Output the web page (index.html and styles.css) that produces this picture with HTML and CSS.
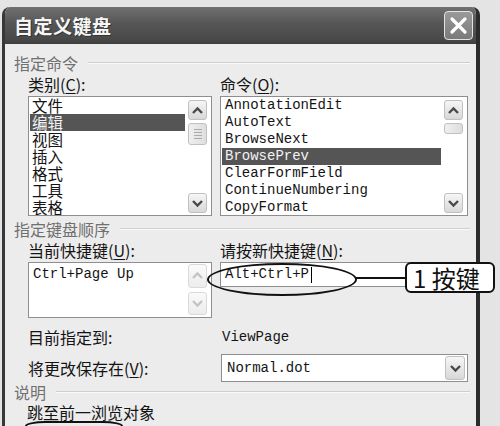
FILE: index.html
```html
<!DOCTYPE html>
<html lang="zh">
<head>
<meta charset="utf-8">
<title>自定义键盘</title>
<link rel="stylesheet" href="styles.css">
</head>
<body>
<div class="window">
  <div class="titlebar">
    <span class="title">自定义键盘</span>
    <span class="close"><svg width="21" height="21" viewBox="0 0 21 21"><path d="M4 4 L17 17 M17 4 L4 17" stroke="#fff" stroke-width="3.2" stroke-linecap="round"/></svg></span>
  </div>
  <div class="content">
    <div class="group-head first"><span>指定命令</span><i class="rule"></i></div>
    <div class="cols">
      <div class="col">
        <div class="label">类别(<u>C</u>):</div>
        <div class="listbox tall">
          <ul class="items cjk">
            <li>文件</li>
            <li class="sel">编辑</li>
            <li>视图</li>
            <li>插入</li>
            <li>格式</li>
            <li>工具</li>
            <li>表格</li>
          </ul>
          <div class="vscroll">
            <span class="sbtn"><svg width="13" height="9" viewBox="0 0 13 9"><path d="M2 7 L6.5 2.5 L11 7" fill="none" stroke="#4a4a4a" stroke-width="2.4"/></svg></span>
            <span class="thumb big"><i></i><i></i><i></i><i></i></span>
            <span class="fill"></span>
            <span class="sbtn"><svg width="13" height="9" viewBox="0 0 13 9"><path d="M2 2 L6.5 6.5 L11 2" fill="none" stroke="#4a4a4a" stroke-width="2.4"/></svg></span>
          </div>
        </div>
      </div>
      <div class="col">
        <div class="label">命令(<u>O</u>):</div>
        <div class="listbox tall">
          <ul class="items mono">
            <li>AnnotationEdit</li>
            <li>AutoText</li>
            <li>BrowseNext</li>
            <li class="sel">BrowsePrev</li>
            <li>ClearFormField</li>
            <li>ContinueNumbering</li>
            <li>CopyFormat</li>
          </ul>
          <div class="vscroll">
            <span class="sbtn"><svg width="13" height="9" viewBox="0 0 13 9"><path d="M2 7 L6.5 2.5 L11 7" fill="none" stroke="#4a4a4a" stroke-width="2.4"/></svg></span>
            <span class="thumb small"></span>
            <span class="fill"></span>
            <span class="sbtn"><svg width="13" height="9" viewBox="0 0 13 9"><path d="M2 2 L6.5 6.5 L11 2" fill="none" stroke="#4a4a4a" stroke-width="2.4"/></svg></span>
          </div>
        </div>
      </div>
    </div>

    <div class="group-head"><span>指定键盘顺序</span><i class="rule"></i></div>
    <div class="cols">
      <div class="col">
        <div class="label">当前快捷键(<u>U</u>):</div>
        <div class="listbox short">
          <ul class="items mono plain">
            <li>Ctrl+Page Up</li>
          </ul>
          <div class="vscroll disabled">
            <span class="sbtn tallbtn"><svg width="13" height="9" viewBox="0 0 13 9"><path d="M2 7 L6.5 2.5 L11 7" fill="none" stroke="#c4c4c4" stroke-width="2.4"/></svg></span>
            <span class="sbtn tallbtn"><svg width="13" height="9" viewBox="0 0 13 9"><path d="M2 2 L6.5 6.5 L11 2" fill="none" stroke="#c4c4c4" stroke-width="2.4"/></svg></span>
          </div>
        </div>
      </div>
      <div class="col">
        <div class="label">请按新快捷键(<u>N</u>):</div>
        <div class="textbox mono">Alt+Ctrl+P<span class="caret"></span></div>
      </div>
    </div>

    <div class="cols row-assigned">
      <div class="col label">目前指定到:</div>
      <div class="col mono value">ViewPage</div>
    </div>
    <div class="cols row-save">
      <div class="col label">将更改保存在(<u>V</u>):</div>
      <div class="col">
        <div class="select mono">
          <span class="sel-text">Normal.dot</span>
          <span class="sbtn dd"><svg width="13" height="9" viewBox="0 0 13 9"><path d="M2 2 L6.5 6.5 L11 2" fill="none" stroke="#4a4a4a" stroke-width="2.4"/></svg></span>
        </div>
      </div>
    </div>

    <div class="group-head"><span>说明</span><i class="rule"></i></div>
    <div class="desc">跳至前一浏览对象</div>
  </div>
</div>

<div class="ring ring-key"></div>
<div class="leader"></div>
<div class="callout">1 按键</div>
<div class="ring-desc"></div>
</body>
</html>
```

FILE: styles.css
```css
html, body {
  margin: 0;
  padding: 0;
}
body {
  position: relative;
  width: 500px;
  height: 426px;
  overflow: hidden;
  background: #e4e4e4;
  font-family: "Noto Sans CJK SC", "Liberation Sans", sans-serif;
  color: #141414;
}
ul { list-style: none; margin: 0; padding: 0; }

.window {
  box-sizing: border-box;
  margin: 7px 0 0 2px;
  width: 478px;
  height: 419px;
  background: #ececec;
  border-left: 3px solid #383838;
  border-right: 4px solid #2c2c2c;
  border-radius: 8px 8px 0 0;
  overflow: hidden;
}

.titlebar {
  height: 37px;
  display: flex;
  align-items: center;
  justify-content: space-between;
  padding: 0 3px 0 9px;
  background: linear-gradient(#707070, #565656 45%, #4a4a4a 85%, #3e3e3e);
}
.title {
  font-size: 19px;
  font-weight: bold;
  color: #f6f6f6;
  letter-spacing: 0.5px;
  text-shadow: 1px 1px 0 #333;
}
.close {
  box-sizing: border-box;
  width: 29px;
  height: 29px;
  display: flex;
  align-items: center;
  justify-content: center;
  background: linear-gradient(#9a9a9a, #7a7a7a);
  border: 1.5px solid #e4e4e4;
  border-radius: 4px;
}

.content {
  padding: 0 6px 0 9px;
}

.group-head {
  display: flex;
  align-items: center;
  gap: 10px;
  height: 20px;
  margin-top: 3px;
  font-size: 16px;
  line-height: 20px;
  color: #707070;
}
.group-head.first { margin-top: 9px; }
.group-head .rule {
  flex: 1;
  height: 1px;
  background: #cfcfcf;
  border-bottom: 1px solid #fafafa;
}

.cols {
  display: grid;
  grid-template-columns: 184px 248px;
  column-gap: 8px;
  margin-left: 14px;
}

.label {
  font-size: 16px;
  line-height: 20px;
  height: 20px;
  margin: 1px 0 2px;
  white-space: nowrap;
}
.label u { text-underline-offset: 2px; }

.listbox {
  box-sizing: border-box;
  display: flex;
  background: #fff;
  border: 1px solid #8e8e8e;
  overflow: hidden;
}
.listbox.tall { height: 120px; margin-top: 1px; }
.listbox.short { height: 56px; }

.items {
  flex: 1;
  padding: 0 1px;
  margin-right: 2px;
}
.items li {
  height: 17px;
  line-height: 17px;
  padding-left: 2px;
  white-space: nowrap;
}
.items.cjk li { font-size: 15.5px; }
.items.mono li { padding-left: 3px; }
.items.plain { padding-top: 3px; }
.items li.sel {
  background: #555;
  color: #f2f2f2;
}

.mono {
  font-family: "Liberation Mono", "DejaVu Sans Mono", monospace;
  font-size: 14px;
}

.vscroll {
  width: 19px;
  display: flex;
  flex-direction: column;
  gap: 3px;
  padding: 3px 4px 2px 0;
}
.vscroll .fill { flex: 1; }
.vscroll.disabled { gap: 4px; padding-top: 1px; }

.sbtn {
  box-sizing: border-box;
  width: 19px;
  height: 20px;
  display: flex;
  align-items: center;
  justify-content: center;
  background: linear-gradient(#f6f6f6, #d8d8d8);
  border: 1px solid #c0c0c0;
  border-radius: 3px;
}
.sbtn.tallbtn {
  height: 24px;
  background: linear-gradient(#fafafa, #ececec);
  border-color: #dadada;
}
.thumb {
  box-sizing: border-box;
  width: 19px;
  background: linear-gradient(90deg, #efefef, #dedede);
  border: 1px solid #c0c0c0;
  border-radius: 3px;
  display: flex;
  flex-direction: column;
  align-items: center;
  justify-content: center;
  gap: 2px;
}
.thumb.big { height: 22px; }
.thumb.small { height: 11px; }
.thumb i {
  display: block;
  width: 8px;
  height: 1px;
  background: #aaa;
}

.textbox {
  box-sizing: border-box;
  height: 25px;
  line-height: 23px;
  padding-left: 4px;
  background: #fff;
  border: 1px solid #8e8e8e;
  display: flex;
  align-items: center;
}
.caret {
  display: inline-block;
  width: 1px;
  height: 16px;
  margin-left: 2px;
  background: #000;
}

.row-assigned {
  margin-top: 9px;
  height: 20px;
  align-items: center;
}
.row-assigned .label { margin: 0; }
.row-assigned .value { padding-left: 2px; line-height: 20px; }

.row-save {
  margin-top: 7px;
  align-items: center;
}
.row-save .label { margin: 0; }
.select {
  box-sizing: border-box;
  height: 28px;
  margin-left: 1px;
  display: flex;
  align-items: center;
  justify-content: space-between;
  padding: 0 2px 0 5px;
  background: #fff;
  border: 1px solid #8e8e8e;
}
.sbtn.dd { height: 24px; width: 20px; }

.row-save + .group-head { margin-top: 0; }

.desc {
  margin-left: 13px;
  font-size: 16px;
  line-height: 20px;
}

/* annotation overlay */
.ring {
  position: absolute;
  box-sizing: border-box;
  border: 2px solid #111;
  border-radius: 50%;
}
.ring-key {
  left: 207px;
  top: 263px;
  width: 150px;
  height: 33px;
}
.ring-desc {
  position: absolute;
  box-sizing: border-box;
  left: 25px;
  top: 421px;
  width: 98px;
  height: 5px;
  border: 2px solid #111;
  border-bottom: none;
  border-radius: 49px 49px 0 0 / 12px 12px 0 0;
}
.leader {
  position: absolute;
  left: 356px;
  top: 277px;
  width: 50px;
  height: 2px;
  background: #111;
}
.callout {
  position: absolute;
  box-sizing: border-box;
  left: 405px;
  top: 262px;
  width: 90px;
  height: 31px;
  border: 2px solid #111;
  border-radius: 6px;
  background: #fff;
  font-family: "Noto Sans CJK SC", "Liberation Sans", sans-serif;
  font-size: 24px;
  line-height: 27px;
  padding-left: 6px;
  color: #111;
  white-space: nowrap;
}
```
